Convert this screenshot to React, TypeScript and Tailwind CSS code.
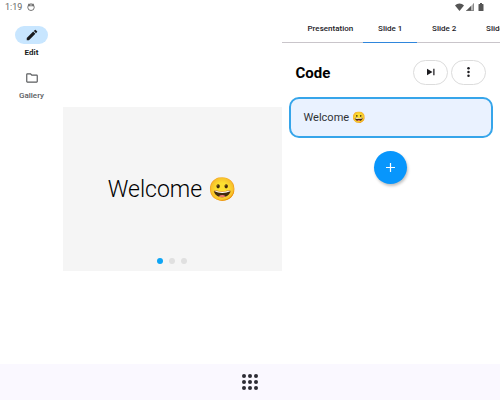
import clsx from 'clsx'
import { useState } from 'react'

const tabs = ['Presentation', 'Slide 1', 'Slide 2', 'Slide 3']

function StatusBar() {
  return (
    <header className="flex h-[14px] shrink-0 items-center justify-between pl-[5px] pr-4 text-[#666]">
      <div className="flex items-center gap-[5px]">
        <span className="text-[9px] leading-[14px]">1:19</span>
        <svg viewBox="0 0 16 16" className="size-2" fill="none">
          <circle cx="8" cy="8.500" r="6.500" stroke="currentColor" strokeWidth="1.800" />
          <path d="M2.500 1.500h11v5h-11z" fill="currentColor" />
          <path d="M5.500 4h5" stroke="white" strokeWidth="1.500" />
        </svg>
      </div>
      <div className="flex items-center gap-[2px]">
        <svg viewBox="0 0 18 16" className="h-2 w-[9px]" fill="#555">
          <path d="M9 16 0 5C2.400 2.500 5.500 1 9 1s6.600 1.500 9 4z" />
        </svg>
        <svg viewBox="0 0 16 16" className="size-2">
          <path d="M16 0v16H0z" fill="#b5b5b5" />
          <path d="M10 6v10H0z" fill="#555" />
          <path d="M15.200 1v14.200H1" stroke="#777" strokeWidth="1.500" fill="none" />
        </svg>
        <svg viewBox="0 0 12 16" className="ml-[2px] h-2 w-[6px]" fill="#555">
          <path d="M4 0h4v2h2a1 1 0 0 1 1 1v12a1 1 0 0 1-1 1H2a1 1 0 0 1-1-1V3a1 1 0 0 1 1-1h2z" />
        </svg>
      </div>
    </header>
  )
}

function SideNav() {
  return (
    <nav className="flex w-[63px] shrink-0 flex-col items-center gap-[7px] pt-3">
      <button className="flex flex-col items-center text-[#1a1c1e]">
        <span className="flex h-[18px] w-[33px] items-center justify-center rounded-full bg-[#c8e6ff]">
          <svg viewBox="0 0 24 24" className="size-[14px]" fill="currentColor">
            <path d="M3 17.250V21h3.750L17.810 9.940l-3.750-3.750zM20.710 7.040a1 1 0 0 0 0-1.410l-2.340-2.340a1 1 0 0 0-1.410 0l-1.830 1.830 3.750 3.750z" />
          </svg>
        </span>
        <span className="text-[8px] font-bold leading-[18px]">Edit</span>
      </button>
      <button className="flex flex-col items-center text-[#5a5c5e]">
        <span className="flex h-[18px] w-[33px] items-center justify-center">
          <svg viewBox="0 0 24 24" className="size-[14px]" fill="currentColor">
            <path d="m9.170 6 2 2H20v10H4V6zM10 4H4a2 2 0 0 0-2 2v12a2 2 0 0 0 2 2h16a2 2 0 0 0 2-2V8a2 2 0 0 0-2-2h-8z" />
          </svg>
        </span>
        <span className="text-[8px] font-medium leading-[18px]">Gallery</span>
      </button>
    </nav>
  )
}

function SlidePreview() {
  return (
    <section className="flex min-w-0 flex-1 items-center">
      <div className="flex aspect-4/3 w-full flex-col items-center bg-[#f5f5f5] pb-[7px]">
        <p className="flex flex-1 items-center pt-4 text-[23px] font-light text-black">
          Welcome 😀
        </p>
        <div className="flex items-center gap-[6px]">
          <span className="size-[6px] rounded-full bg-[#0ea5f5]" />
          <span className="size-[6px] rounded-full bg-[#e0e0e0]" />
          <span className="size-[6px] rounded-full bg-[#e0e0e0]" />
        </div>
      </div>
    </section>
  )
}

function SlideTabs() {
  const [active, setActive] = useState('Slide 1')

  return (
    <div
      className="flex shrink-0 overflow-hidden pl-4 shadow-[inset_0_-1px_0_#c9c5ca]"
      role="tablist"
    >
      {tabs.map((tab) => (
        <button
          key={tab}
          role="tab"
          aria-selected={tab === active}
          onClick={() => setActive(tab)}
          className={clsx(
            'h-[29px] min-w-[54px] shrink-0 px-[10px] pt-px text-[8px] font-medium text-[#1c1b1f]',
            tab === active && 'shadow-[inset_0_-1px_0_#2f86dc]',
          )}
        >
          {tab}
        </button>
      ))}
    </div>
  )
}

function CodePanel() {
  return (
    <section className="flex min-w-0 flex-1 flex-col">
      <SlideTabs />
      <div className="flex items-center gap-[3px] px-[14px] pt-4">
        <h1 className="flex-1 pt-[2px] text-[15px] font-bold leading-6 text-black">Code</h1>
        <button
          aria-label="Play slide"
          className="flex h-[25px] w-[35px] items-center justify-center rounded-full border border-[#dcdcdc] text-[#1c1b1f]"
        >
          <svg viewBox="0 0 16 16" className="size-2" fill="currentColor">
            <path d="M0 1.500 11 8 0 14.500z" />
            <path d="M12.500 1.500h2.500v13h-2.500z" />
          </svg>
        </button>
        <button
          aria-label="More options"
          className="flex h-[25px] w-[35px] items-center justify-center rounded-full border border-[#dcdcdc] text-[#1c1b1f]"
        >
          <svg viewBox="0 0 4 16" className="h-[10px] w-[3px]" fill="currentColor">
            <circle cx="2" cy="2" r="2" />
            <circle cx="2" cy="8" r="2" />
            <circle cx="2" cy="14" r="2" />
          </svg>
        </button>
      </div>
      <div className="flex flex-col items-center gap-[13px] px-[7px] pt-3">
        <button className="h-[41px] w-full rounded-[10px] border-2 border-[#36a5ea] bg-[#eaf2ff] px-[13px] pt-[2px] text-left text-[11px] text-[#303236]">
          Welcome 😀
        </button>
        <button
          aria-label="Add block"
          className="flex size-[33px] items-center justify-center rounded-full bg-[#0896fc] text-white shadow-[1px_2px_3px_rgba(0,0,0,0.25)]"
        >
          <svg viewBox="0 0 9 9" className="size-[9px]" fill="currentColor">
            <path d="M3.900 0h1.200v3.900H9v1.200H5.100V9H3.900V5.100H0V3.900h3.900z" />
          </svg>
        </button>
      </div>
    </section>
  )
}

export default function App() {
  return (
    <div className="flex h-screen flex-col bg-white font-[Roboto,sans-serif]">
      <StatusBar />
      <main className="flex min-h-0 flex-1">
        <SideNav />
        <SlidePreview />
        <CodePanel />
      </main>
      <footer className="flex h-9 shrink-0 items-center justify-center bg-[#faf8ff]">
        <button aria-label="Apps" className="grid grid-cols-3 gap-[2px]">
          {Array.from({ length: 9 }, (_, i) => (
            <span key={i} className="size-1 rounded-full bg-[#2c2c34]" />
          ))}
        </button>
      </footer>
    </div>
  )
}
